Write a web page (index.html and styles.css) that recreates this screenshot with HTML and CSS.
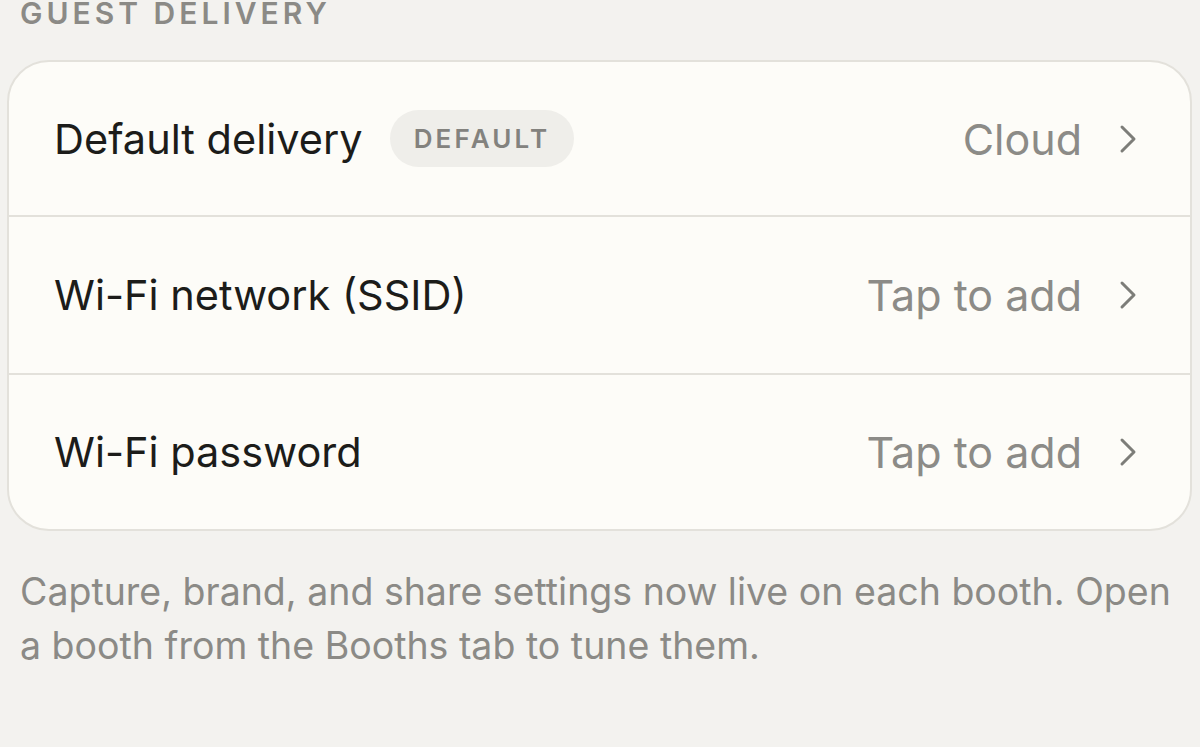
FILE: index.html
```html
<!DOCTYPE html>
<html>
<head>
<meta charset="utf-8">
<link rel="stylesheet" href="styles.css">
</head>
<body>
<div class="screen">
  <div class="section-title">GUEST DELIVERY</div>
  <div class="card">
    <div class="row">
      <div class="label">Default delivery <span class="badge">DEFAULT</span></div>
      <div class="value">Cloud <svg class="chev" viewBox="0 0 20 30"><path d="M4 3 L16 15 L4 27" fill="none" stroke="#7d7d79" stroke-width="3" stroke-linecap="round" stroke-linejoin="round"/></svg></div>
    </div>
    <div class="row">
      <div class="label">Wi-Fi network (SSID)</div>
      <div class="value">Tap to add <svg class="chev" viewBox="0 0 20 30"><path d="M4 3 L16 15 L4 27" fill="none" stroke="#7d7d79" stroke-width="3" stroke-linecap="round" stroke-linejoin="round"/></svg></div>
    </div>
    <div class="row">
      <div class="label">Wi-Fi password</div>
      <div class="value">Tap to add <svg class="chev" viewBox="0 0 20 30"><path d="M4 3 L16 15 L4 27" fill="none" stroke="#7d7d79" stroke-width="3" stroke-linecap="round" stroke-linejoin="round"/></svg></div>
    </div>
  </div>
  <p class="note">Capture, brand, and share settings now live on each booth. Open a booth from the Booths tab to tune them.</p>
</div>
</body>
</html>
```
FILE: styles.css
```css
html, body {
  margin: 0;
  padding: 0;
  background: #f3f2ef;
  height: 100%;
  overflow: hidden;
}
.screen {
  font-family: "Inter", "Lato", sans-serif;
  padding: 0 8px 0 7px;
}
.section-title {
  margin: -7px 0 0 13px;
  height: 67px;
  font-size: 30px;
  font-weight: 600;
  letter-spacing: 4px;
  color: #8b8a86;
  line-height: 40px;
}
.card {
  background: #fdfcf8;
  border: 2px solid #e3e1db;
  border-radius: 42px;
  overflow: hidden;
}
.row {
  height: 156px;
  display: flex;
  align-items: center;
  justify-content: space-between;
  padding: 0 52px 0 45px;
  border-top: 2px solid #e3e1db;
}
.row:first-child {
  border-top: none;
  height: 153px;
}
.row:last-child {
  height: 154px;
}
.label {
  font-size: 41.5px;
  color: #1c1c1a;
  display: flex;
  align-items: center;
}
.badge {
  margin-left: 27px;
  background: #efeeea;
  border-radius: 29px;
  height: 57px;
  padding: 0 24px;
  display: inline-flex;
  align-items: center;
  font-size: 26px;
  font-weight: 600;
  letter-spacing: 3.2px;
  color: #83827e;
}
.value {
  font-size: 43px;
  color: #8c8b87;
  display: flex;
  align-items: center;
}
.chev {
  width: 20px;
  height: 30px;
  margin-left: 36px;
}
.note {
  margin: 34px 14px 0 13px;
  font-size: 37.5px;
  line-height: 54px;
  color: #8b8a86;
}
```
